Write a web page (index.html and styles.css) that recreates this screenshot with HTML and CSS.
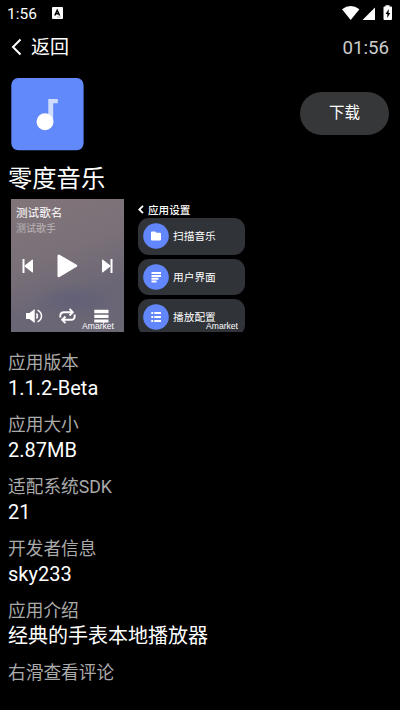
FILE: index.html
```html
<!DOCTYPE html>
<html lang="zh-CN">
<head>
<meta charset="utf-8">
<title>零度音乐</title>
<link rel="stylesheet" href="styles.css">
</head>
<body>
<div class="status">
  <span class="status-time">1:56</span>
  <svg class="status-app" width="11" height="12" viewBox="0 0 11 12"><rect width="11" height="12" rx="1" fill="#fff"/><path d="M2.800 8.500 5.200 3.200 7.600 8.500M3.700 6.800h3" fill="none" stroke="#000" stroke-width="1.500"/><path d="M5 10h4" stroke="#777" stroke-width=".6"/></svg>
  <svg class="status-icons" width="51" height="16" viewBox="0 0 51 16" fill="#fff"><path d="M0 4.200Q8.700-2.200 17.400 4.200L8.700 15Z"/><path d="M33 2.500V15H20.500Z"/><path d="M43.500 1.500V.3h4v1.200h1.500q1 0 1 1V14q0 1-1 1h-6.500q-1 0-1-1V2.500q0-1 1-1Z"/><path d="M46.800 4 43.600 9h1.700v4l2.900-5h-1.600Z" fill="#000"/></svg>
</div>
<header class="header">
  <svg width="11" height="18" viewBox="0 0 11 18"><path d="M9.500 1.500 2 9l7.500 7.500" fill="none" stroke="#fff" stroke-width="2"/></svg>
  <span class="back">返回</span>
  <span class="clock">01:56</span>
</header>
<section class="hero">
  <svg width="73" height="73" viewBox="0 0 73 73"><rect x=".3" width="72.300" height="72.300" rx="7" fill="#6189fc"/><path d="M37.300 21h9.500v4.200h-4.600V44h-4.900Z" fill="#d0dcfe"/><circle cx="34" cy="43.700" r="8.500" fill="#fff"/></svg>
  <button class="download">下载</button>
</section>
<h1 class="title">零度音乐</h1>
<section class="shots">
  <div class="player">
    <div class="song">测试歌名</div>
    <div class="singer">测试歌手</div>
    <div class="controls">
      <svg width="12" height="16" viewBox="0 0 12 16" fill="#fff"><path d="M.5 1h2v14h-2Z"/><path d="M11 2.200v11.600q0 1.200-1 .5L3 8.700q-.7-.7 0-1.400L10 1.700q1-.7 1 .5Z"/></svg>
      <svg width="21" height="24" viewBox="0 0 21 24" fill="#fff"><path d="M.5 2Q.5-.3 2.500.7l16.800 9.700q2 1.300 0 2.600L2.500 23q-2 1-2-1.200Z"/></svg>
      <svg width="12" height="16" viewBox="0 0 12 16" fill="#fff"><path d="M9.500 1h2v14h-2Z"/><path d="M1 2.200v11.600q0 1.200 1 .5l7-5.600q.7-.7 0-1.400L2 1.700q-1-.7-1 .5Z"/></svg>
    </div>
    <div class="tools">
      <svg width="17" height="16" viewBox="0 0 17 16"><path d="M0 5h3.500L8.700 1v14l-5.200-4H0Z" fill="#fff"/><path d="M10.400 5.500q2 2.500 0 5M11.500 2.200q4 2 4 5.800t-4 5.800" fill="none" stroke="#fff" stroke-width="1.500"/></svg>
      <svg width="17" height="16" viewBox="0 0 17 16" fill="none" stroke="#fff" stroke-width="1.900"><path d="M1.300 9.500V8Q1.300 4.200 5 4.200h8M10.500.9l3.300 3.300-3.300 3.300M15.700 6.500V8q0 3.800-3.700 3.800H4M6.500 8.500l-3.300 3.300 3.300 3.300"/></svg>
      <svg width="15" height="16" viewBox="0 0 15 16" fill="#fff"><path d="M.3 1.700h14.200v3.500H.3ZM.3 6.800h14.200v3.300H.3ZM.3 11.600h14.200v3H.3Z"/></svg>
    </div>
    <span class="mark">Amarket</span>
  </div>
  <div class="settings">
    <div class="settings-head"><svg width="6" height="9" viewBox="0 0 6 9"><path d="M5 .8 1.300 4.500 5 8.200" fill="none" stroke="#fff" stroke-width="1.800"/></svg>应用设置</div>
    <div class="card"><svg width="26" height="26" viewBox="0 0 26 26"><circle cx="13" cy="13" r="12.800" fill="#6286fb"/><path d="M8 9.500q0-1 1-1h3l1.500 1.300H17q1 0 1 1v5.700q0 1-1 1H9q-1 0-1-1Z" fill="#fff"/></svg><span>扫描音乐</span></div>
    <div class="card"><svg width="26" height="26" viewBox="0 0 26 26"><circle cx="13" cy="13" r="12.800" fill="#6286fb"/><path d="M8.500 9h9.500M8.500 12h9.500M8.500 14.800h7M8.500 17.500h5" stroke="#fff" stroke-width="2"/></svg><span>用户界面</span></div>
    <div class="card"><svg width="26" height="26" viewBox="0 0 26 26"><circle cx="13" cy="13" r="12.800" fill="#6286fb"/><path d="M8.300 9h1.900M11.300 9h6.700M8.300 13h1.900M11.300 13h6.700M8.300 17h1.900M11.300 17h6.700" stroke="#fff" stroke-width="2"/></svg><span>播放配置</span></div>
    <span class="mark">Amarket</span>
  </div>
</section>
<dl class="info">
  <dt>应用版本</dt><dd>1.1.2-Beta</dd>
  <dt>应用大小</dt><dd>2.87MB</dd>
  <dt>适配系统SDK</dt><dd>21</dd>
  <dt>开发者信息</dt><dd>sky233</dd>
  <dt>应用介绍</dt><dd>经典的手表本地播放器</dd>
</dl>
<p class="hint">右滑查看评论</p>
</body>
</html>
```
FILE: styles.css
```css
* { box-sizing: border-box; }
body {
  margin: 0;
  height: 710px;
  overflow: hidden;
  background: #000;
  color: #fff;
  font-family: Roboto, "Noto Sans CJK SC", sans-serif;
}
svg { display: block; flex: none; }
.status { display: flex; align-items: center; height: 28px; padding: 0 7px; }
.status-time { width: 45px; font-size: 15.500px; font-weight: 450; line-height: 28px; }
.status-app { margin-top: -2px; }
.status-icons { margin-left: auto; margin-top: -2px; }
.header { display: flex; align-items: center; height: 38px; padding: 0 11px; }
.back { margin-left: 9px; padding-top: 2px; font-size: 19px; line-height: 36px; }
.clock { margin-left: auto; padding-top: 1px; font-size: 18.700px; color: #ccc; }
.hero { display: flex; justify-content: space-between; align-items: center; height: 73px; margin-top: 12px; padding: 0 11px; }
.download {
  width: 89px;
  height: 43px;
  margin-top: -2px;
  padding: 0;
  border: 0;
  border-radius: 22px;
  background: #363739;
  color: #fff;
  font: 15.500px/43px Roboto, "Noto Sans CJK SC", sans-serif;
}
.title { margin: 10px 8px 0; height: 36px; font-size: 24.300px; font-weight: 400; line-height: 36px; }
.shots { display: flex; gap: 14px; height: 133px; margin: 2px 11px 0; }
.player {
  position: relative;
  width: 113px;
  height: 133px;
  padding: 6px 5px 0;
  background:
    radial-gradient(ellipse 45px 18px at 64px 102px, #626078, transparent),
    linear-gradient(160deg, #817579 0%, #7a7078 40%, #6b6675 70%, #6b6674 100%);
}
.song { font-size: 11.600px; line-height: 16px; }
.singer { color: #bcb6ba; font-size: 10px; line-height: 15px; }
.controls { display: flex; justify-content: space-between; align-items: center; height: 24px; margin: 18px 6px 0; }
.tools { display: flex; justify-content: space-between; margin: 30px 10px 0; }
.tools svg:nth-child(2) { margin-left: -2px; }
.mark { position: absolute; right: 10px; bottom: 1px; font: 8.600px/10px "Liberation Sans", sans-serif; }
.settings { position: relative; width: 107px; height: 133px; overflow: hidden; }
.settings .mark { right: 7px; }
.settings-head { display: flex; align-items: center; gap: 4px; height: 19px; padding-top: 1px; font-size: 10.600px; font-weight: 500; }
.card {
  display: flex;
  align-items: center;
  gap: 4px;
  height: 36.500px;
  margin-bottom: 4px;
  padding-left: 5px;
  border-radius: 11px;
  background: #303338;
  font-size: 10.700px;
}
.card span { margin-top: -1px; }
.info { margin: 18px 8px 0; }
.info dt { padding-top: 1px; height: 24px; font-size: 17.700px; line-height: 24px; color: #aaa; }
.info dd { height: 28px; margin: 0 0 10.100px; font-size: 20px; line-height: 28px; }
.hint { margin: 0 8px; padding-top: 1px; font-size: 17.700px; line-height: 24px; color: #aaa; }
```
